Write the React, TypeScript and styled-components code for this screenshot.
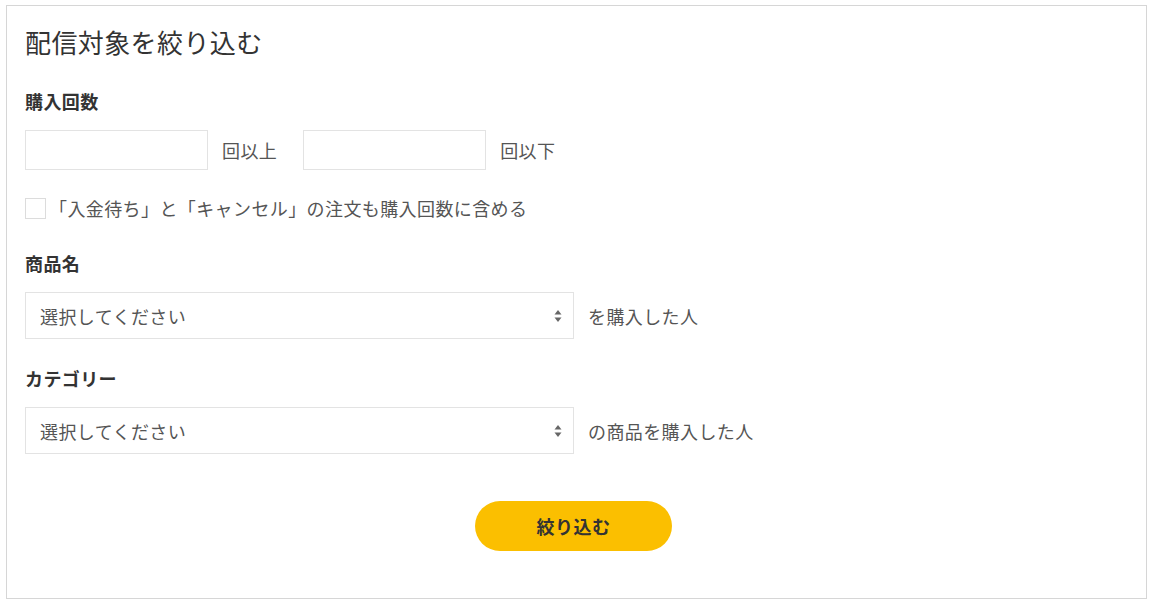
import React from 'react';
import styled, { createGlobalStyle } from 'styled-components';

const GlobalStyle = createGlobalStyle`
    html, body {
        margin: 0;
        padding: 0;
        background: #fff;
    }

    body {
        font-family: "Noto Sans CJK JP", "Noto Sans", sans-serif;
        color: #555;
        letter-spacing: 0.025em;
    }
`;

const Panel = styled.div`
    box-sizing: border-box;
    width: 1141px;
    height: 594px;
    margin: 5px 0 0 6px;
    padding: 18px 24px 0 18px;
    border: 1px solid #d6d6d6;
    display: flex;
    flex-direction: column;
`;

const Title = styled.h2`
    margin: 0;
    font-size: 26px;
    line-height: 36px;
    font-weight: 400;
    color: #333;
`;

const Label = styled.div<{ $top: number }>`
    margin-top: ${(p) => p.$top}px;
    font-size: 18px;
    line-height: 26px;
    font-weight: 700;
    color: #333;
`;

const Row = styled.div<{ $top: number }>`
    margin-top: ${(p) => p.$top}px;
    display: flex;
    align-items: center;
`;

const TextInput = styled.input`
    box-sizing: border-box;
    width: 183px;
    height: 40px;
    border: 1px solid #e3e3e3;
    border-radius: 0;
    padding: 0 12px;
    font: inherit;
    outline: none;
`;

const Suffix = styled.span<{ $gap: number; $after?: number }>`
    margin-left: ${(p) => p.$gap}px;
    margin-right: ${(p) => p.$after ?? 0}px;
    font-size: 18px;
    line-height: 26px;
    color: #555;
    white-space: nowrap;
`;

const CheckBox = styled.span`
    box-sizing: border-box;
    width: 21px;
    height: 21px;
    border: 1px solid #dcdcdc;
    background: #fff;
    flex-shrink: 0;
`;

const CheckText = styled.span`
    margin-left: 3px;
    font-size: 18px;
    line-height: 26px;
    color: #555;
`;

const SelectBox = styled.div`
    position: relative;
    box-sizing: border-box;
    width: 549px;
    height: 47px;
    border: 1px solid #e3e3e3;
    display: flex;
    align-items: center;
    padding-left: 14px;
    font-size: 18px;
    color: #555;
`;

const Arrows = styled.svg`
    position: absolute;
    right: 10px;
    top: 50%;
    margin-top: -7px;
`;

const ButtonRow = styled.div`
    margin-top: 47px;
    display: flex;
    justify-content: center;
`;

const SubmitButton = styled.button`
    width: 197px;
    height: 50px;
    border: none;
    border-radius: 25px;
    background: #fbbf00;
    color: #333;
    font-family: inherit;
    font-size: 18px;
    font-weight: 700;
    letter-spacing: 0.025em;
    cursor: pointer;
`;

const Select: React.FC<{ placeholder: string }> = ({ placeholder }) => (
    <SelectBox>
        {placeholder}
        <Arrows width="10" height="14" viewBox="0 0 10 14">
            <path d="M5 1 L8.5 5.5 H1.5 Z" fill="#666" />
            <path d="M5 13 L8.5 8.5 H1.5 Z" fill="#666" />
        </Arrows>
    </SelectBox>
);

export default function App() {
    return (
        <>
            <GlobalStyle />
            <Panel>
                <Title>配信対象を絞り込む</Title>

                <Label $top={28}>購入回数</Label>
                <Row $top={16}>
                    <TextInput />
                    <Suffix $gap={14} $after={26}>回以上</Suffix>
                    <TextInput />
                    <Suffix $gap={14}>回以下</Suffix>
                </Row>

                <Row $top={25}>
                    <CheckBox />
                    <CheckText>「入金待ち」と「キャンセル」の注文も購入回数に含める</CheckText>
                </Row>

                <Label $top={29}>商品名</Label>
                <Row $top={16}>
                    <Select placeholder="選択してください" />
                    <Suffix $gap={14}>を購入した人</Suffix>
                </Row>

                <Label $top={26}>カテゴリー</Label>
                <Row $top={16}>
                    <Select placeholder="選択してください" />
                    <Suffix $gap={14}>の商品を購入した人</Suffix>
                </Row>

                <ButtonRow>
                    <SubmitButton>絞り込む</SubmitButton>
                </ButtonRow>
            </Panel>
        </>
    );
}
